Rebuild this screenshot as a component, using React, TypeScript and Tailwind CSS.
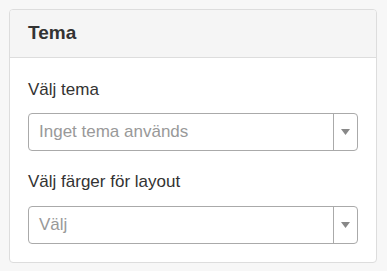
export default function App() {
  const font = { fontFamily: '"Liberation Sans", Arial, sans-serif' };

  const Select = ({ placeholder }: { placeholder: string }) => (
    <div className="flex h-[38px] w-full rounded-[4px] border border-[#aaaaaa] bg-white">
      <div className="flex flex-1 items-center pl-[10px] text-[17px] text-[#999999]">
        {placeholder}
      </div>
      <div className="flex w-[24px] items-center justify-center border-l border-[#aaaaaa]">
        <svg width="9" height="6" viewBox="0 0 9 6">
          <path d="M0 0h9L4.5 6z" fill="#888888" />
        </svg>
      </div>
    </div>
  );

  return (
    <div className="min-h-[271px] bg-[#f7f7f7] p-[9px] pr-[10px]" style={font}>
      <div className="overflow-hidden rounded-[4px] border border-[#dddddd] bg-white">
        <div className="flex h-[48px] items-center border-b border-[#dddddd] bg-[#f5f5f5] px-[18px]">
          <h2 className="text-[19px] font-bold text-[#333333]">Tema</h2>
        </div>
        <div className="px-[18px] pt-[20px] pb-[18px] text-[#333333]">
          <label className="mb-[11px] block text-[17px] leading-[24px]">Välj tema</label>
          <Select placeholder="Inget tema används" />
          <label className="mt-[19px] mb-[12px] block text-[17px] leading-[24px]">
            Välj färger för layout
          </label>
          <Select placeholder="Välj" />
        </div>
      </div>
    </div>
  );
}
